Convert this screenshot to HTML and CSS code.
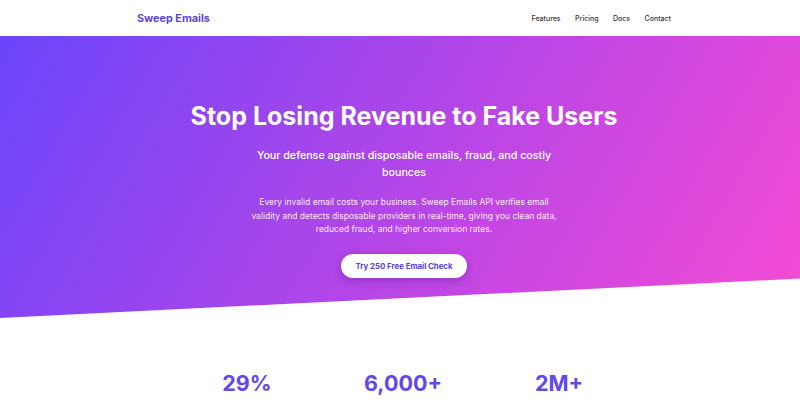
FILE: index.html
```html
<!DOCTYPE html>
<html lang="en">
<head>
<meta charset="utf-8">
<title>Sweep Emails</title>
<link rel="stylesheet" href="styles.css">
</head>
<body>
<header class="site-header">
  <div class="container nav-row">
    <a class="logo" href="#">Sweep Emails</a>
    <nav class="nav">
      <a href="#">Features</a>
      <a href="#">Pricing</a>
      <a href="#">Docs</a>
      <a href="#">Contact</a>
    </nav>
  </div>
</header>
<section class="hero">
  <h1 class="hero-title">Stop Losing Revenue to Fake Users</h1>
  <p class="hero-sub">Your defense against disposable emails, fraud, and costly bounces</p>
  <p class="hero-text">Every invalid email costs your business. Sweep Emails API verifies email validity and detects disposable providers in real-time, giving you clean data, reduced fraud, and higher conversion rates.</p>
  <a class="cta" href="#">Try 250 Free Email Check</a>
</section>
<section class="stats">
  <div class="stat">29%</div>
  <div class="stat">6,000+</div>
  <div class="stat">2M+</div>
</section>
</body>
</html>
```
FILE: styles.css
```css
* { box-sizing: border-box; }
html, body { margin: 0; padding: 0; }
body {
  font-family: Inter, "Noto Sans", sans-serif;
  background: #fff;
  color: #333;
  overflow: hidden;
}
a { text-decoration: none; }
.container {
  max-width: 542px;
  margin: 0 auto;
}
.site-header {
  height: 36px;
  background: #fff;
}
.nav-row {
  height: 100%;
  display: flex;
  align-items: center;
  justify-content: space-between;
  padding-left: 8px;
}
.logo {
  font-size: 10.8px;
  font-weight: 700;
  color: #5f41dd;
}
.nav {
  display: flex;
  gap: 14.5px;
}
.nav a {
  font-size: 7px;
  font-weight: 500;
  color: #333;
}
.hero {
  height: 282px;
  background: linear-gradient(120deg, #6a45fa 0%, #b946e6 55%, #f64bd4 100%);
  clip-path: polygon(0 0, 100% 0, 100% 86%, 0 100%);
  display: flex;
  flex-direction: column;
  align-items: center;
  text-align: center;
  color: #fff;
  padding-top: 62px;
}
.hero-title {
  margin: 0;
  font-size: 25px;
  font-weight: 700;
  line-height: 36px;
  transform: translateX(4px);
}
.hero-sub {
  margin: 12.5px 0 0;
  max-width: 300px;
  font-size: 10.7px;
  font-weight: 500;
  line-height: 17px;
  transform: translateX(4px);
}
.hero-text {
  margin: 15.5px 0 0;
  max-width: 318px;
  font-size: 8.5px;
  line-height: 13.5px;
  color: rgba(255,255,255,0.92);
  transform: translateX(4px);
}
.cta {
  margin-top: 17px;
  background: #fff;
  color: #5b3fd9;
  font-size: 7.8px;
  font-weight: 700;
  height: 24px;
  line-height: 24px;
  width: 126px;
  border-radius: 12px;
  box-shadow: 0 3px 8px rgba(60, 20, 120, 0.3);
  transform: translateX(4px);
}
.stats {
  display: grid;
  grid-template-columns: repeat(3, 156px);
  justify-content: center;
  padding-top: 52px;
  transform: translateX(3px);
}
.stat {
  text-align: center;
  font-size: 21.5px;
  font-weight: 700;
  color: #6347ea;
}
```
